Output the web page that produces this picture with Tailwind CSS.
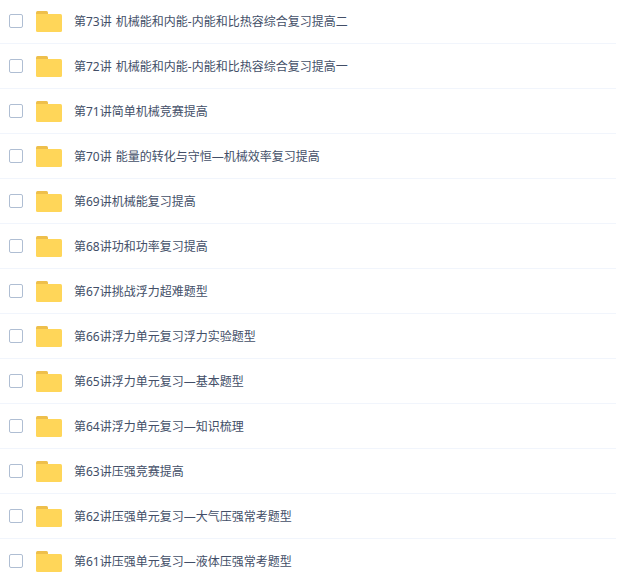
<!DOCTYPE html>
<html lang="zh-CN">
  <head>
    <meta charset="UTF-8" />
    <meta name="viewport" content="width=device-width, initial-scale=1.0" />
    <title>文件列表</title>
    <script src="https://cdn.jsdelivr.net/npm/@tailwindcss/browser@4"></script>
  </head>
  <body class="bg-white overflow-hidden h-screen font-['Noto_Sans','Noto_Sans_CJK_SC',sans-serif]">
    <ul id="fileList" class="-mt-px w-[616px]"></ul>

    <template id="rowTemplate">
      <li class="flex items-center h-[45px] pl-[9px] border-b border-[#f1f5fc]">
        <input
          type="checkbox"
          class="appearance-none size-3.5 shrink-0 rounded-[2px] border border-[#afbed3] bg-white"
        />
        <svg class="ml-[13px] mr-3 w-[26px] h-[21px] shrink-0" viewBox="0 0 26 21">
          <path d="M0 5V1.5Q0 0 1.5 0H10.5Q12 0 12 1.5V5Z" fill="#eebf4b" />
          <path d="M0 3H24.5Q26 3 26 4.5V19.5Q26 21 24.5 21H1.5Q0 21 0 19.5Z" fill="#ffd659" />
        </svg>
        <span class="pt-0.5 text-xs text-[#424e67] whitespace-nowrap [word-spacing:1px]"></span>
      </li>
    </template>

    <script>
      const files = [
        "第73讲 机械能和内能-内能和比热容综合复习提高二",
        "第72讲 机械能和内能-内能和比热容综合复习提高一",
        "第71讲简单机械竞赛提高",
        "第70讲 能量的转化与守恒—机械效率复习提高",
        "第69讲机械能复习提高",
        "第68讲功和功率复习提高",
        "第67讲挑战浮力超难题型",
        "第66讲浮力单元复习浮力实验题型",
        "第65讲浮力单元复习—基本题型",
        "第64讲浮力单元复习—知识梳理",
        "第63讲压强竞赛提高",
        "第62讲压强单元复习—大气压强常考题型",
        "第61讲压强单元复习—液体压强常考题型",
      ];

      const fileList = document.getElementById("fileList");
      const rowTemplate = document.getElementById("rowTemplate");

      files.forEach((name) => {
        const row = rowTemplate.content.cloneNode(true);
        row.querySelector("span").textContent = name;
        fileList.appendChild(row);
      });
    </script>
  </body>
</html>
